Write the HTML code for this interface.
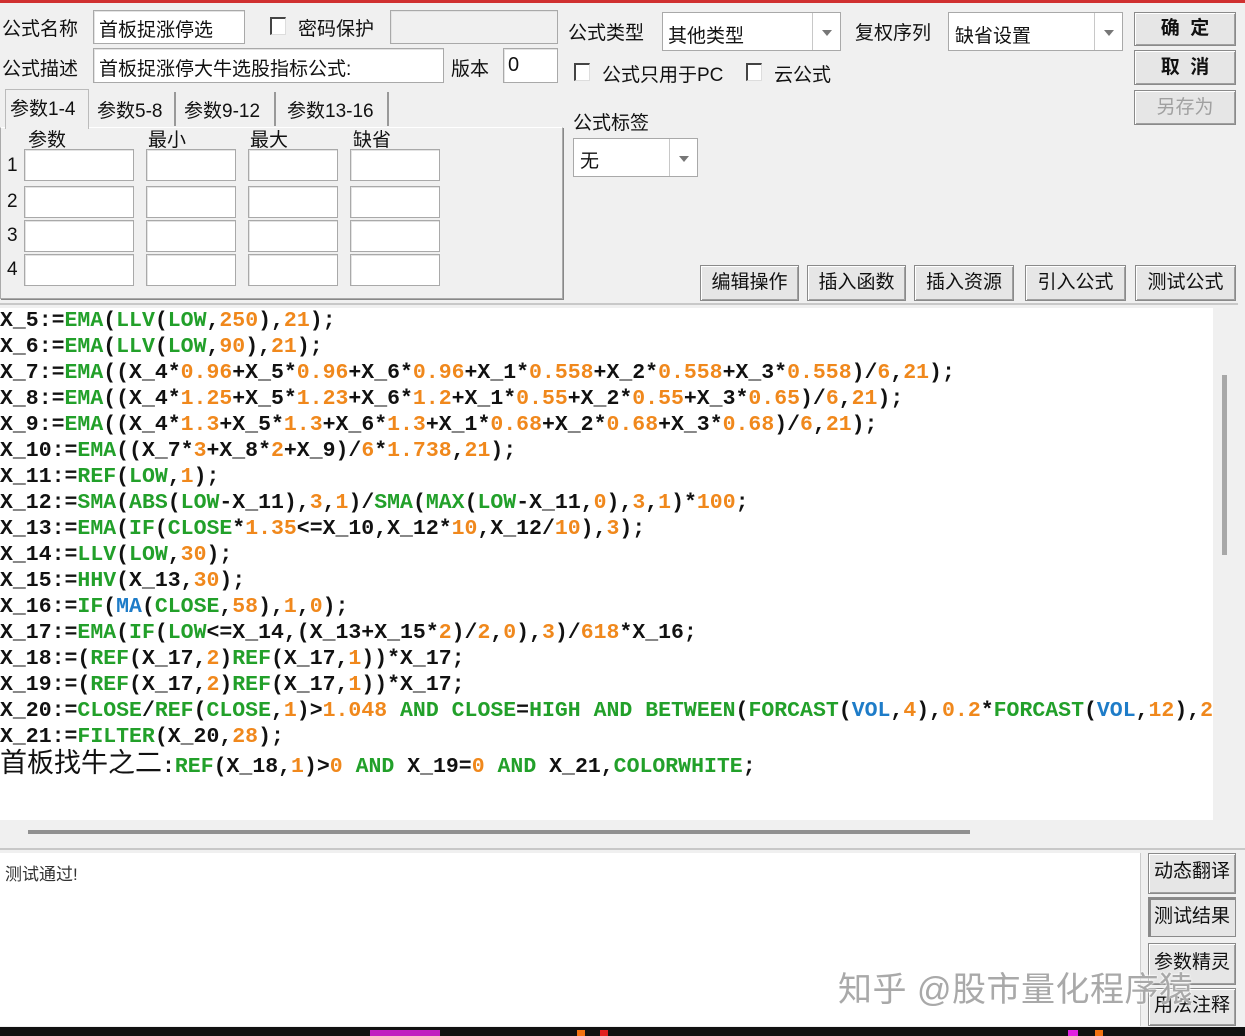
<!DOCTYPE html>
<html><head><meta charset="utf-8"><style>
*{margin:0;padding:0;box-sizing:border-box}
body{width:1245px;height:1036px;overflow:hidden;background:#f0f0f0;position:relative;font-family:"Liberation Sans","Noto Sans CJK SC",sans-serif;font-size:19px;color:#111}
.a{position:absolute;white-space:nowrap}
.box{position:absolute;background:#fff;border:1px solid #a9a9a9;box-shadow:inset 1px 1px 0 #e3e3e3}
.cb{position:absolute;width:16px;height:18px;border-left:2px solid #444;border-top:2px solid #444;background:#fff;border-right:1px solid #ddd;border-bottom:1px solid #ddd}
.btn{position:absolute;background:#e6e6e6;border:1px solid #8a8a8a;box-shadow:inset 1px 1px 0 #fff,inset -1px -1px 0 #a0a0a0;text-align:center;font-size:19px}
.sel{position:absolute;background:#fff;border:1px solid #a9a9a9}
.sel i{position:absolute;right:0;top:0;bottom:0;width:28px;border-left:1px solid #c8c8c8}
.sel i:after{content:"";position:absolute;left:9px;top:50%;margin-top:-2px;border:5px solid transparent;border-top:6px solid #777;border-bottom:0}
#code{position:absolute;left:0;top:308px;width:1213px;height:512px;background:#fff;overflow:hidden;font-family:"Liberation Mono",monospace;font-weight:bold;font-size:21.5px;line-height:26px;color:#111}
#code div{white-space:pre;height:26px}
.g{color:#22a02a}.o{color:#f0881c}.b{color:#1e7cc8}
.tab{position:absolute;top:92px;height:34px;border:1px solid #bbb;border-bottom:none;background:#f0f0f0;font-size:19px;padding:4px 4px 0}
</style></head><body>
<div class="a" style="left:0;top:0;width:1245px;height:3px;background:#d03030"></div>

<div class="a" style="left:2px;top:14px">公式名称</div>
<div class="box" style="left:93px;top:10px;width:152px;height:34px"></div>
<div class="a" style="left:99px;top:15px">首板捉涨停选</div>
<div class="cb" style="left:270px;top:17px"></div>
<div class="a" style="left:298px;top:14px">密码保护</div>
<div class="box" style="left:390px;top:10px;width:168px;height:34px;background:#f0f0f0"></div>

<div class="a" style="left:2px;top:54px">公式描述</div>
<div class="box" style="left:93px;top:48px;width:351px;height:35px"></div>
<div class="a" style="left:99px;top:54px">首板捉涨停大牛选股指标公式:</div>
<div class="a" style="left:451px;top:54px">版本</div>
<div class="box" style="left:503px;top:48px;width:55px;height:35px"></div>
<div class="a" style="left:508px;top:54px;font-size:20px">0</div>

<div class="a" style="left:0;top:127px;width:563px;height:172px;border:1px solid #aaa;border-top-color:#fff;box-shadow:1px 1px 0 #888"></div>
<div class="tab" style="left:5px;top:89px;height:40px;width:84px;border-bottom:none;z-index:2">参数1-4</div>
<div class="tab" style="left:93px;width:83px;border-left:none;border-top:none;border-right:2px solid #999">参数5-8</div>
<div class="tab" style="left:180px;width:96px;border-left:none;border-top:none;border-right:2px solid #999">参数9-12</div>
<div class="tab" style="left:283px;width:106px;border-left:none;border-top:none;border-right:2px solid #999">参数13-16</div>
<div class="a" style="left:28px;top:125px">参数</div>
<div class="a" style="left:148px;top:125px">最小</div>
<div class="a" style="left:250px;top:125px">最大</div>
<div class="a" style="left:353px;top:125px">缺省</div>
<div class="a" style="left:7px;top:155px">1</div><div class="a" style="left:7px;top:191px">2</div><div class="a" style="left:7px;top:225px">3</div><div class="a" style="left:7px;top:259px">4</div>
<div class="box" style="left:24px;top:149px;width:110px;height:32px"></div><div class="box" style="left:146px;top:149px;width:90px;height:32px"></div><div class="box" style="left:248px;top:149px;width:90px;height:32px"></div><div class="box" style="left:350px;top:149px;width:90px;height:32px"></div>
<div class="box" style="left:24px;top:186px;width:110px;height:32px"></div><div class="box" style="left:146px;top:186px;width:90px;height:32px"></div><div class="box" style="left:248px;top:186px;width:90px;height:32px"></div><div class="box" style="left:350px;top:186px;width:90px;height:32px"></div>
<div class="box" style="left:24px;top:220px;width:110px;height:32px"></div><div class="box" style="left:146px;top:220px;width:90px;height:32px"></div><div class="box" style="left:248px;top:220px;width:90px;height:32px"></div><div class="box" style="left:350px;top:220px;width:90px;height:32px"></div>
<div class="box" style="left:24px;top:254px;width:110px;height:32px"></div><div class="box" style="left:146px;top:254px;width:90px;height:32px"></div><div class="box" style="left:248px;top:254px;width:90px;height:32px"></div><div class="box" style="left:350px;top:254px;width:90px;height:32px"></div>

<div class="a" style="left:568px;top:18px">公式类型</div>
<div class="sel" style="left:662px;top:12px;width:179px;height:39px"><i></i></div>
<div class="a" style="left:668px;top:21px">其他类型</div>
<div class="a" style="left:855px;top:18px">复权序列</div>
<div class="sel" style="left:948px;top:12px;width:175px;height:39px"><i></i></div>
<div class="a" style="left:955px;top:21px">缺省设置</div>
<div class="cb" style="left:574px;top:63px"></div>
<div class="a" style="left:602px;top:60px">公式只用于PC</div>
<div class="cb" style="left:746px;top:63px"></div>
<div class="a" style="left:774px;top:60px">云公式</div>
<div class="a" style="left:573px;top:108px">公式标签</div>
<div class="sel" style="left:573px;top:138px;width:125px;height:39px"><i></i></div>
<div class="a" style="left:580px;top:146px">无</div>

<div class="btn" style="left:1134px;top:12px;width:102px;height:34px;line-height:32px;font-weight:bold">确&nbsp;&nbsp;定</div>
<div class="btn" style="left:1134px;top:50px;width:102px;height:35px;line-height:33px;font-weight:bold">取&nbsp;&nbsp;消</div>
<div class="btn" style="left:1134px;top:90px;width:102px;height:35px;line-height:33px;color:#a0a0a0">另存为</div>

<div class="btn" style="left:700px;top:265px;width:99px;height:36px;line-height:34px">编辑操作</div>
<div class="btn" style="left:807px;top:265px;width:99px;height:36px;line-height:34px">插入函数</div>
<div class="btn" style="left:914px;top:265px;width:100px;height:36px;line-height:34px">插入资源</div>
<div class="btn" style="left:1025px;top:265px;width:101px;height:36px;line-height:34px">引入公式</div>
<div class="btn" style="left:1135px;top:265px;width:101px;height:36px;line-height:34px">测试公式</div>
<div class="a" style="left:0;top:303px;width:1238px;height:2px;background:#c8c8c8"></div>

<div id="code">
<div>X_5:=<span class="g">EMA</span>(<span class="g">LLV</span>(<span class="g">LOW</span>,<span class="o">250</span>),<span class="o">21</span>);</div>
<div>X_6:=<span class="g">EMA</span>(<span class="g">LLV</span>(<span class="g">LOW</span>,<span class="o">90</span>),<span class="o">21</span>);</div>
<div>X_7:=<span class="g">EMA</span>((X_4*<span class="o">0.96</span>+X_5*<span class="o">0.96</span>+X_6*<span class="o">0.96</span>+X_1*<span class="o">0.558</span>+X_2*<span class="o">0.558</span>+X_3*<span class="o">0.558</span>)/<span class="o">6</span>,<span class="o">21</span>);</div>
<div>X_8:=<span class="g">EMA</span>((X_4*<span class="o">1.25</span>+X_5*<span class="o">1.23</span>+X_6*<span class="o">1.2</span>+X_1*<span class="o">0.55</span>+X_2*<span class="o">0.55</span>+X_3*<span class="o">0.65</span>)/<span class="o">6</span>,<span class="o">21</span>);</div>
<div>X_9:=<span class="g">EMA</span>((X_4*<span class="o">1.3</span>+X_5*<span class="o">1.3</span>+X_6*<span class="o">1.3</span>+X_1*<span class="o">0.68</span>+X_2*<span class="o">0.68</span>+X_3*<span class="o">0.68</span>)/<span class="o">6</span>,<span class="o">21</span>);</div>
<div>X_10:=<span class="g">EMA</span>((X_7*<span class="o">3</span>+X_8*<span class="o">2</span>+X_9)/<span class="o">6</span>*<span class="o">1.738</span>,<span class="o">21</span>);</div>
<div>X_11:=<span class="g">REF</span>(<span class="g">LOW</span>,<span class="o">1</span>);</div>
<div>X_12:=<span class="g">SMA</span>(<span class="g">ABS</span>(<span class="g">LOW</span>-X_11),<span class="o">3</span>,<span class="o">1</span>)/<span class="g">SMA</span>(<span class="g">MAX</span>(<span class="g">LOW</span>-X_11,<span class="o">0</span>),<span class="o">3</span>,<span class="o">1</span>)*<span class="o">100</span>;</div>
<div>X_13:=<span class="g">EMA</span>(<span class="g">IF</span>(<span class="g">CLOSE</span>*<span class="o">1.35</span>&lt;=X_10,X_12*<span class="o">10</span>,X_12/<span class="o">10</span>),<span class="o">3</span>);</div>
<div>X_14:=<span class="g">LLV</span>(<span class="g">LOW</span>,<span class="o">30</span>);</div>
<div>X_15:=<span class="g">HHV</span>(X_13,<span class="o">30</span>);</div>
<div>X_16:=<span class="g">IF</span>(<span class="b">MA</span>(<span class="g">CLOSE</span>,<span class="o">58</span>),<span class="o">1</span>,<span class="o">0</span>);</div>
<div>X_17:=<span class="g">EMA</span>(<span class="g">IF</span>(<span class="g">LOW</span>&lt;=X_14,(X_13+X_15*<span class="o">2</span>)/<span class="o">2</span>,<span class="o">0</span>),<span class="o">3</span>)/<span class="o">618</span>*X_16;</div>
<div>X_18:=(<span class="g">REF</span>(X_17,<span class="o">2</span>)<span class="g">REF</span>(X_17,<span class="o">1</span>))*X_17;</div>
<div>X_19:=(<span class="g">REF</span>(X_17,<span class="o">2</span>)<span class="g">REF</span>(X_17,<span class="o">1</span>))*X_17;</div>
<div>X_20:=<span class="g">CLOSE</span>/<span class="g">REF</span>(<span class="g">CLOSE</span>,<span class="o">1</span>)&gt;<span class="o">1.048</span> <span class="g">AND</span> <span class="g">CLOSE</span>=<span class="g">HIGH</span> <span class="g">AND</span> <span class="g">BETWEEN</span>(<span class="g">FORCAST</span>(<span class="b">VOL</span>,<span class="o">4</span>),<span class="o">0.2</span>*<span class="g">FORCAST</span>(<span class="b">VOL</span>,<span class="o">12</span>),<span class="o">2</span></div>
<div>X_21:=<span class="g">FILTER</span>(X_20,<span class="o">28</span>);</div>
<div><span style="font-family:'Liberation Sans','Noto Sans CJK SC',sans-serif;font-weight:normal;font-size:27px">首板找牛之二</span>:<span class="g">REF</span>(X_18,<span class="o">1</span>)&gt;<span class="o">0</span> <span class="g">AND</span> X_19=<span class="o">0</span> <span class="g">AND</span> X_21,<span class="g">COLORWHITE</span>;</div>
</div>
<div class="a" style="left:1222px;top:375px;width:5px;height:180px;background:#a8a8a8"></div>
<div class="a" style="left:28px;top:830px;width:942px;height:4px;background:#909090"></div>
<div class="a" style="left:0;top:848px;width:1245px;height:2px;background:#c8c8c8"></div>

<div class="a" style="left:0;top:853px;width:1141px;height:173px;background:#fff;border-right:1px solid #ccc"></div>
<div class="a" style="left:5px;top:860px;font-size:17px;color:#333">测试通过!</div>
<div class="btn" style="left:1148px;top:853px;width:88px;height:41px;line-height:36px">动态翻译</div>
<div class="btn" style="left:1148px;top:897px;width:88px;height:40px;line-height:38px;box-shadow:inset 2px 2px 0 #888">测试结果</div>
<div class="btn" style="left:1148px;top:943px;width:88px;height:42px;line-height:38px">参数精灵</div>
<div class="btn" style="left:1148px;top:988px;width:88px;height:38px;line-height:34px">用法注释</div>
<div class="a" style="left:838px;top:962px;font-size:34px;letter-spacing:0.5px;color:#a9a9a9;text-shadow:0 0 2px #fff,0 0 2px #fff">知乎 @股市量化程序猿</div>

<div class="a" style="left:0;top:1027px;width:1245px;height:9px;background:#111"></div>
<div class="a" style="left:370px;top:1030px;width:70px;height:6px;background:#c020c0"></div>
<div class="a" style="left:577px;top:1030px;width:8px;height:6px;background:#f07010"></div>
<div class="a" style="left:600px;top:1030px;width:8px;height:6px;background:#e02020"></div>
<div class="a" style="left:1068px;top:1030px;width:10px;height:6px;background:#e020e0"></div>
<div class="a" style="left:1095px;top:1030px;width:8px;height:6px;background:#f07010"></div>
</body></html>
